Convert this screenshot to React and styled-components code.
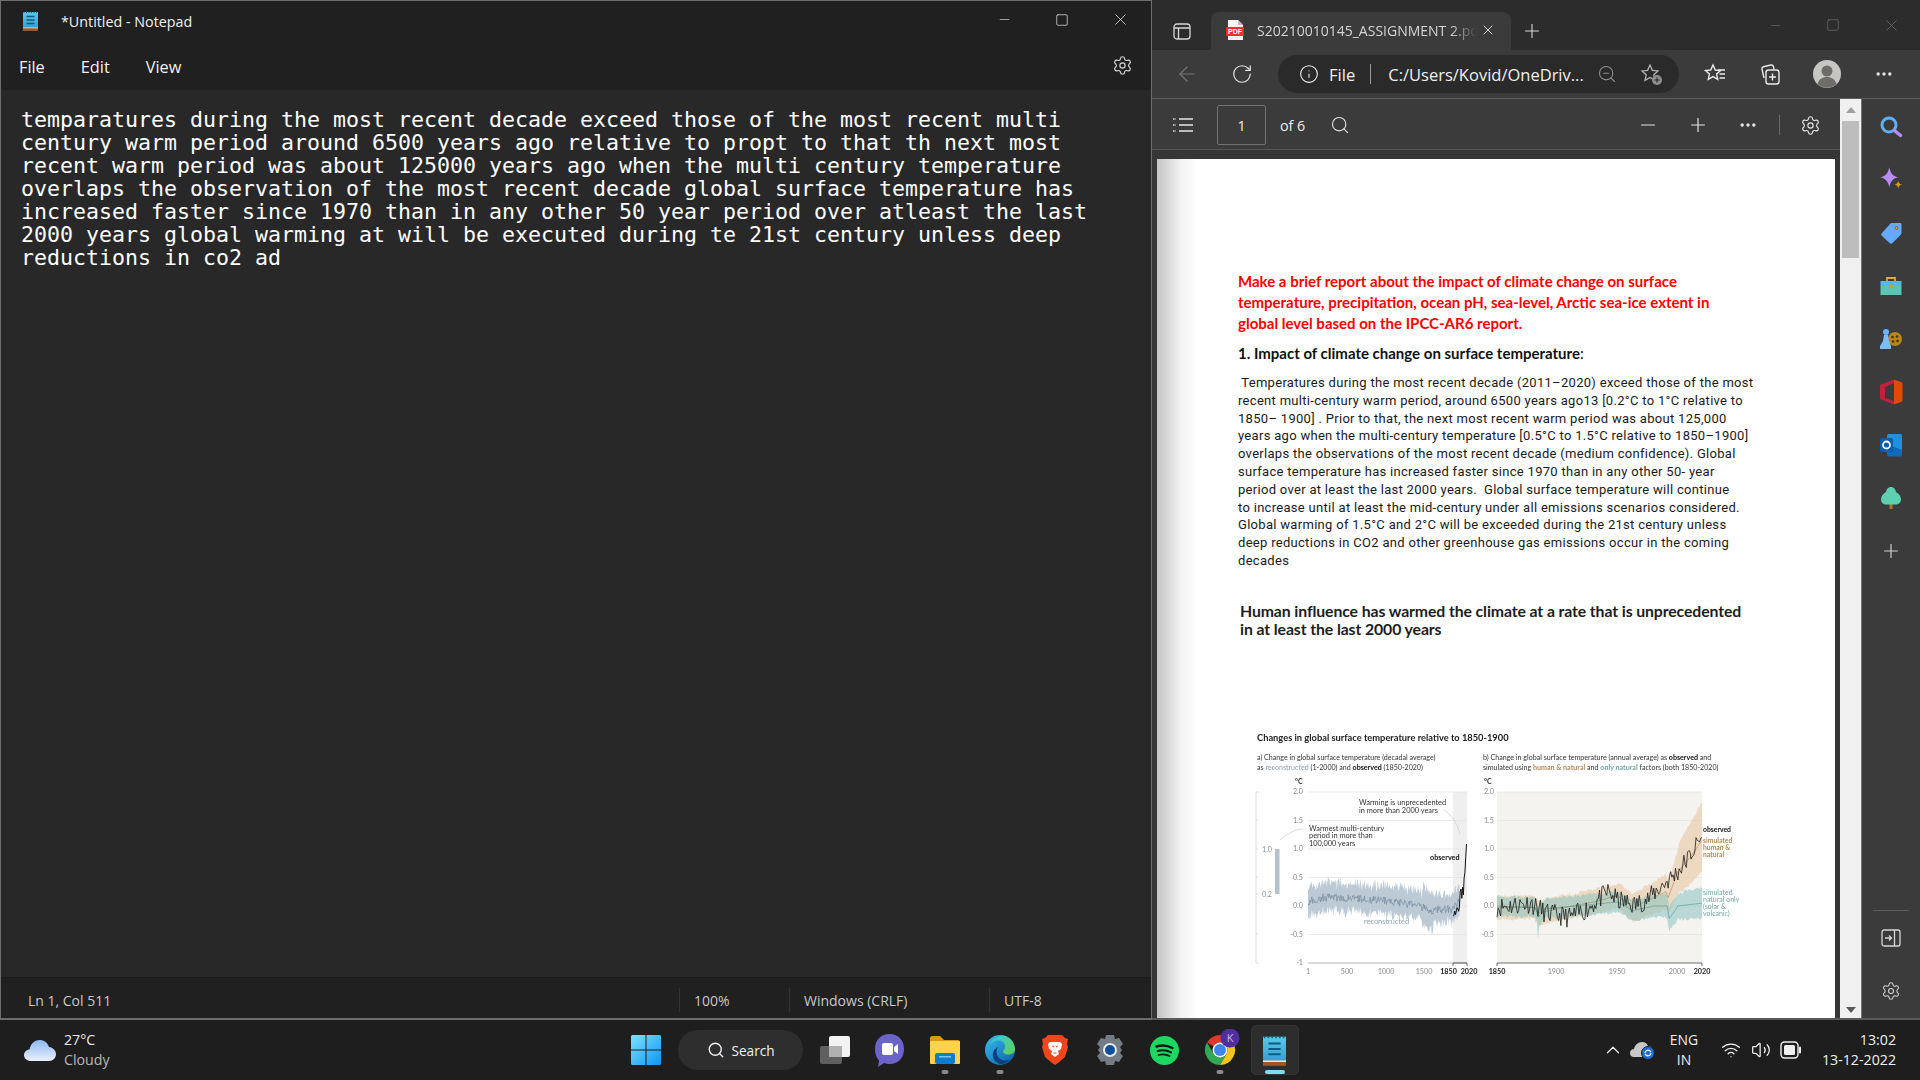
import React from 'react';
import styled, { createGlobalStyle } from 'styled-components';
import {
    ArrowLeft, RotateCw, Info, ZoomOut, Search, Minus, Plus, Ellipsis, Settings, X, Square, ChevronUp, Wifi, Volume2,
} from 'lucide-react';

const GlobalStyle = createGlobalStyle`
    html, body {
        margin: 0;
        width: 1920px;
        height: 1080px;
        overflow: hidden;
        background: #1f1f1f;
        font-family: "Open Sans", "Noto Sans", sans-serif;
    }
    * { box-sizing: border-box; }
`;

const Screen = styled.div`
    width: 1920px;
    height: 1080px;
    display: flex;
    flex-direction: column;
`;

const Desktop = styled.div`
    height: 1020px;
    display: flex;
`;

/* ---------- notepad ---------- */

const Notepad = styled.section`
    width: 1152px;
    display: flex;
    flex-direction: column;
    border: 1px solid #6d6d6d;
    border-width: 1px 1px 2px 1px;
    background: #202020;
    color: #fff;
`;

const NoteTitleBar = styled.div`
    height: 44px;
    flex: none;
    display: flex;
    align-items: center;
    padding: 0 2px 4px 22px;
`;

const NoteTitle = styled.span`
    margin-left: 23px;
    font-size: 14.3px;
    color: #f0f0f0;
`;

const WindowControls = styled.div`
    margin-left: auto;
    margin-top: -3px;
    display: flex;
    color: ${props => props.$dim ? '#6f6f6f' : '#e8e8e8'};
`;

const WindowButton = styled.div`
    width: ${props => props.$width || 58}px;
    height: 40px;
    display: flex;
    align-items: center;
    justify-content: center;
`;

const NoteMenuBar = styled.div`
    height: 45px;
    flex: none;
    display: flex;
    align-items: center;
    padding: 0 13px 2px 18px;
    gap: 36px;
`;

const MenuItem = styled.span`
    font-size: 16.3px;
    color: #f2f2f2;
`;

const NoteGear = styled.div`
    margin-left: auto;
    color: #d6d6d6;
    display: flex;
    margin-right: 5px;
    margin-bottom: 2px;
`;

const Editor = styled.div`
    flex: 1;
    background: #282828;
    padding: 18px 0 0 20px;
    font-family: "DejaVu Sans Mono", monospace;
    font-size: 21.6px;
    line-height: 23px;
    color: #fff;
`;

const EditorLine = styled.div`
    white-space: pre;
`;

const NoteStatus = styled.div`
    height: 41px;
    flex: none;
    display: flex;
    align-items: center;
    padding-top: 4px;
    font-size: 14px;
    color: #c8c8c8;
    border-top: 1px solid #1b1b1b;
`;

const StatusCell = styled.div`
    width: ${props => props.$width}px;
    height: 24px;
    display: flex;
    align-items: center;
    padding-left: ${props => props.$first ? 27 : 14}px;
    border-left: ${props => props.$first ? 'none' : '1px solid #333'};
`;

/* ---------- browser ---------- */

const Browser = styled.section`
    width: 768px;
    display: flex;
    flex-direction: column;
    background: #3b3b3b;
    color: #f0f0f0;
`;

const TabStrip = styled.div`
    height: 50px;
    flex: none;
    display: flex;
    align-items: flex-end;
    background: #2c2c2c;
    padding-left: 59px;
    position: relative;
`;

const TabActions = styled.div`
    position: absolute;
    left: 21px;
    top: 23px;
    display: flex;
`;

const Tab = styled.div`
    width: 300px;
    height: 38px;
    display: flex;
    align-items: center;
    padding: 0 10px 2px 15px;
    background: #3b3b3b;
    border-radius: 8px 8px 0 0;
`;

const TabTitle = styled.span`
    margin-left: 13px;
    width: 220px;
    overflow: hidden;
    white-space: nowrap;
    font-size: 14px;
    color: #d4d4d4;
    -webkit-mask-image: linear-gradient(90deg, #000 88%, transparent);
    mask-image: linear-gradient(90deg, #000 88%, transparent);
`;

const TabClose = styled.span`
    display: flex;
    margin-left: 3px;
    color: #e2e2e2;
`;

const NewTab = styled.span`
    display: flex;
    margin: 0 0 8px 10px;
    color: #d8d8d8;
`;

const StripControls = styled(WindowControls)`
    position: absolute;
    right: 0;
    top: 5px;
    margin-top: 0;
    gap: 0;
`;

const Toolbar = styled.div`
    height: 49px;
    flex: none;
    display: flex;
    align-items: center;
    padding: 0 0 0 20px;
    border-bottom: 1px solid #5c5c5c;
`;

const ToolIcon = styled.div`
    width: ${props => props.$width || 30}px;
    height: 30px;
    flex: none;
    display: flex;
    align-items: center;
    justify-content: center;
    margin-left: ${props => props.$left || 0}px;
    color: ${props => props.$color || '#e6e6e6'};
`;

const AddressPill = styled.div`
    width: 401px;
    height: 38px;
    margin-left: 21px;
    padding-left: 21px;
    display: flex;
    align-items: center;
    background: #2a2a2a;
    border-radius: 19px;
    flex: none;
`;

const AddressFile = styled.span`
    margin-left: 10px;
    font-size: 16.6px;
    color: #f0f0f0;
`;

const AddressRule = styled.span`
    width: 1px;
    height: 20px;
    margin: 0 17px 0 15px;
    background: #9a9a9a;
`;

const AddressUrl = styled.span`
    width: 207px;
    flex: none;
    font-size: 16.5px;
    white-space: nowrap;
    color: #f0f0f0;
`;

const Avatar = styled.div`
    width: 28px;
    height: 28px;
    margin-left: 28px;
    display: flex;
    flex: none;
`;

const BrowserBody = styled.div`
    flex: 1;
    min-height: 0;
    display: flex;
    border-bottom: 2px solid #5a5a5a;
`;

const PdfColumn = styled.div`
    width: 688px;
    flex: none;
    display: flex;
    flex-direction: column;
    min-height: 0;
`;

const PdfToolbar = styled.div`
    height: 51px;
    flex: none;
    display: flex;
    align-items: center;
    padding: 2px 0 0 20px;
    border-bottom: 1px solid #555;
    font-size: 14px;
`;

const PageBox = styled.div`
    width: 49px;
    height: 40px;
    margin-left: 23px;
    flex: none;
    display: flex;
    align-items: center;
    justify-content: center;
    border: 1px solid #737373;
    border-radius: 2px;
    font-size: 14.3px;
`;

const PageCount = styled.span`
    margin-left: 14px;
    font-size: 14.3px;
    color: #eee;
`;

const PdfRule = styled.span`
    width: 1px;
    height: 20px;
    margin-left: 16px;
    background: #6a6a6a;
`;

const PdfCanvas = styled.div`
    flex: 1;
    min-height: 0;
    padding: 9px 0 0 5px;
    display: flex;
    background: #363636;
`;

const PdfPage = styled.article`
    width: 678px;
    padding: 112px 0 0 81px;
    background: linear-gradient(90deg, #c4c4c4 0, #f2f2f2 24px, #fff 40px);
    overflow: hidden;
    font-family: Lato, "Liberation Sans", sans-serif;
    color: #111;
`;

const RedHeading = styled.div`
    color: #f00;
    font-weight: 700;
    font-size: 15px;
    line-height: 21px;
    white-space: pre;
`;

const SectionHeading = styled.div`
    margin-top: 9px;
    font-weight: 700;
    font-size: 15px;
    line-height: 21px;
    white-space: pre;
    color: #111;
`;

const HeadingColon = styled.span`
    font-weight: 400;
`;

const BodyCopy = styled.div`
    margin-top: 10px;
    font-family: Roboto, Lato, sans-serif;
    font-size: 13px;
    line-height: 17.8px;
    letter-spacing: 0.3px;
    color: #1a1a1a;
`;

const CopyLine = styled.div`
    white-space: pre;
`;

const Claim = styled.div`
    margin: 32px 0 0 2px;
    font-weight: 700;
    font-size: 15.8px;
    line-height: 18.5px;
    color: #1d1d1d;
    letter-spacing: -0.1px;
`;

const ChartSvg = styled.svg`
    display: block;
    margin: 81px 0 0 2px;
    filter: blur(0.3px);
`;

const ChartText = styled.text`
    font-family: Lato, sans-serif;
    font-size: ${props => props.$size || 7.2}px;
    font-weight: ${props => props.$bold ? 700 : 400};
    fill: ${props => props.$fill || '#333'};
`;

const Scrollbar = styled.div`
    width: 22px;
    flex: none;
    display: flex;
    flex-direction: column;
    align-items: center;
    justify-content: space-between;
    padding: 8px 0 5px;
    background: #f0f0f0;
    border-right: 1px solid #777;
    position: relative;
`;

const ScrollThumb = styled.div`
    position: absolute;
    top: 22px;
    left: 2px;
    width: 17px;
    height: 137px;
    background: #bdbdbd;
`;

const ArrowUp = styled.div`
    width: 0;
    height: 0;
    border: 5px solid transparent;
    border-top: 0;
    border-bottom: 6px solid #a0a0a0;
`;

const ArrowDown = styled.div`
    width: 0;
    height: 0;
    border: 5px solid transparent;
    border-bottom: 0;
    border-top: 6px solid #5a5a5a;
`;

const Sidebar = styled.aside`
    width: 58px;
    flex: none;
    display: flex;
    flex-direction: column;
    align-items: center;
    padding: 1px 0 0;
`;

const SideSlot = styled.div`
    width: 58px;
    height: 53px;
    flex: none;
    display: flex;
    align-items: center;
    justify-content: center;
    color: #d0d0d0;
`;

const SideFoot = styled.div`
    margin-top: auto;
    border-top: 1px solid #5c5c5c;
    width: 36px;
    display: flex;
    flex-direction: column;
    align-items: center;
    padding: 0 0 1px;
`;

/* ---------- taskbar ---------- */

const Taskbar = styled.footer`
    height: 60px;
    display: grid;
    grid-template-columns: 1fr auto 1fr;
    align-items: center;
    background: #1e1e1e;
    color: #fff;
`;

const Weather = styled.div`
    display: flex;
    align-items: center;
    padding-left: 24px;
`;

const WeatherText = styled.div`
    margin-left: 8px;
    font-size: 14.2px;
    line-height: 20px;
    color: #e8e8e8;
`;

const WeatherSub = styled.div`
    color: #b8b8b8;
`;

const TaskCenter = styled.div`
    display: flex;
    align-items: center;
    gap: 7px;
`;

const TaskButton = styled.div`
    width: 48px;
    height: 50px;
    display: flex;
    align-items: center;
    justify-content: center;
    position: relative;
    border-radius: 5px;
    background: ${props => props.$active ? '#2d2d2d' : 'transparent'};
    border: 1px solid ${props => props.$active ? '#353535' : 'transparent'};
`;

const RunDot = styled.span`
    position: absolute;
    bottom: 0;
    left: 50%;
    transform: translateX(-50%);
    width: ${props => props.$active ? 20 : 7}px;
    height: 4px;
    border-radius: 2px;
    background: ${props => props.$active ? '#7fdde8' : '#8a8a8a'};
`;

const SearchPill = styled.div`
    width: 125px;
    height: 40px;
    margin: 0 1px;
    display: flex;
    align-items: center;
    padding-left: 29px;
    gap: 7px;
    border-radius: 20px;
    background: #2e2e2e;
    font-size: 13.6px;
    color: #f0f0f0;
`;

const Tray = styled.div`
    display: flex;
    align-items: center;
    justify-content: flex-end;
    padding-right: 24px;
`;

const TrayIcon = styled.div`
    width: 30px;
    display: flex;
    align-items: center;
    justify-content: center;
    color: #f0f0f0;
    margin-left: ${props => props.$left || 0}px;
`;

const Lang = styled.div`
    width: 44px;
    margin-left: 4px;
    text-align: center;
    font-size: 13.9px;
    line-height: 20px;
    color: #eee;
`;

const Clock = styled.div`
    width: 90px;
    text-align: right;
    font-size: 14.2px;
    line-height: 20px;
    color: #eee;
`;

/* ---------- drawn icons ---------- */

const NotepadIcon = ({ w = 15, h = 20, id = 'np' }) => (
    <svg width={w} height={h} viewBox="0 0 15 20">
        <defs>
            <linearGradient id={id} x1="0" y1="0" x2="0" y2="1">
                <stop offset="0" stopColor="#5ac8e8" />
                <stop offset="1" stopColor="#2f9fd0" />
            </linearGradient>
        </defs>
        <rect x="0" y="1" width="15" height="17" fill={`url(#${id})`} />
        <path d="M1 0.5v1.5M3.5 0.5v1.5M6 0.5v1.5M8.5 0.5v1.5M11 0.5v1.5M13.5 0.5v1.5" stroke="#0f5f80" strokeWidth="1" />
        <path d="M3.5 5.5h8M3.5 9h8M3.5 12.5h8" stroke="#0f5a82" strokeWidth="1.3" />
        <rect x="0" y="16.5" width="15" height="1" fill="#f0e2c8" />
        <rect x="0" y="17.5" width="15" height="2.5" fill="#a8541e" />
    </svg>
);

const TabListIcon = () => (
    <svg width="18" height="17" viewBox="0 0 18 17" fill="none" stroke="#d6d6d6" strokeWidth="1.3">
        <rect x="1" y="1" width="16" height="15" rx="3" />
        <path d="M1 5h16M5.5 5v11" />
    </svg>
);

const PdfIcon = () => (
    <svg width="18" height="20" viewBox="0 0 18 20">
        <path d="M2 0h10l5 5v15H2z" fill="#f4f4f4" />
        <path d="M12 0l5 5h-5z" fill="#bdbdbd" />
        <rect x="0" y="7" width="18" height="9" rx="1" fill="#ee2f2f" />
        <text x="9" y="14.2" textAnchor="middle" fontSize="7" fontWeight="700" fontFamily="Liberation Sans" fill="#fff">PDF</text>
    </svg>
);

const FavAddIcon = () => (
    <svg width="24" height="24" viewBox="0 0 24 24" fill="none" stroke="#b4b4b4" strokeWidth="1.3">
        <path d="M10 3l2.4 5.3 5.6.6-4.2 3.9 1.2 5.6-5-2.9-5 2.9 1.2-5.6L2 8.9l5.6-.6z" />
        <circle cx="17" cy="18" r="5" fill="#8e8e8e" stroke="none" />
        <path d="M17 15.5v5M14.5 18h5" stroke="#2a2a2a" strokeWidth="1.2" />
    </svg>
);

const FavoritesIcon = () => (
    <svg width="24" height="24" viewBox="0 0 24 24" fill="none" stroke="#eaeaea" strokeWidth="1.4">
        <path d="M10 3l2.3 5 5.2.5-3.9 3.6 1.1 5.2-4.7-2.7-4.7 2.7 1.1-5.2L2.5 8.5 7.7 8z" />
        <path d="M15 8h7M16.5 12h5.5M16.5 16h5.500" />
    </svg>
);

const CollectionsIcon = () => (
    <svg width="24" height="24" viewBox="0 0 24 24" fill="none" stroke="#eaeaea" strokeWidth="1.4">
        <path d="M6 16l-2-9c-.2-1 .3-2 1.3-2.2L13 3c1-.2 2 .3 2.3 1.3L16 7" />
        <rect x="8" y="8" width="13" height="14" rx="2.5" />
        <path d="M14.5 11.5v7M11 15h7" />
    </svg>
);

const ProfileIcon = () => (
    <svg width="28" height="28" viewBox="0 0 28 28">
        <circle cx="14" cy="14" r="14" fill="#c8c6c2" />
        <circle cx="14" cy="11" r="5.5" fill="#6f6d6a" />
        <path d="M4.5 24c1.5-5 5-7 9.5-7s8 2 9.5 7a14 14 0 0 1-19 0z" fill="#6f6d6a" />
    </svg>
);

const OutlineIcon = () => (
    <svg width="22" height="16" viewBox="0 0 22 16" fill="none" stroke="#e6e6e6" strokeWidth="1.4">
        <path d="M7 2h14M7 8h14M7 14h14" />
        <path d="M1 2h2.5M1 8h2.5M1 14h2.5" strokeDasharray="1.5 .5" />
    </svg>
);

const SideSearch = () => (
    <svg width="24" height="24" viewBox="0 0 24 24" fill="none">
        <circle cx="10" cy="10" r="7" stroke="#5cb0ff" strokeWidth="3" />
        <path d="M15.5 15.5l6 5" stroke="#b58cf0" strokeWidth="3.5" strokeLinecap="round" />
    </svg>
);

const SideSparkle = () => (
    <svg width="27" height="27" viewBox="0 0 24 24">
        <path d="M10 1c1 5 3 8 8 9-5 1-7 4-8 9-1-5-3-8-8-9 5-1 7-4 8-9z" fill="#b78df5" />
        <path d="M18 13c.4 2 1.2 3 3.5 3.5-2.3.5-3.1 1.5-3.5 3.5-.4-2-1.2-3-3.5-3.5 2.3-.5 3.1-1.5 3.5-3.5z" fill="#d69a1c" />
    </svg>
);

const SideTag = () => (
    <svg width="24" height="24" viewBox="0 0 24 24">
        <path d="M13 2h8c1 0 1.5.5 1.5 1.5v8c0 1-.5 2-1 2.5l-8 8c-1 1-2 1-3 0l-7.5-7c-1-1-1-2 0-3l8-9c.5-.5 1-1 2-1z" fill="#66aaff" />
        <circle cx="17.5" cy="7" r="1.8" fill="#8a5a10" />
        <circle cx="17.5" cy="7" r="1" fill="#f0a020" />
    </svg>
);

const SideTools = () => (
    <svg width="24" height="24" viewBox="0 0 24 24">
        <path d="M8 7V4h8v3" fill="none" stroke="#e0a63c" strokeWidth="1.8" />
        <rect x="1.5" y="7" width="21" height="5" fill="#5ab4f0" />
        <rect x="1.5" y="12" width="21" height="9" fill="#5cc4b4" />
        <rect x="10.5" y="10.5" width="3" height="4" rx="1" fill="#d69a1c" />
    </svg>
);

const SideGames = () => (
    <svg width="24" height="24" viewBox="0 0 24 24">
        <circle cx="16" cy="12" r="7" fill="#b8861c" />
        <circle cx="13.5" cy="10" r="1.3" fill="#4a3208" />
        <circle cx="18" cy="9.5" r="1.3" fill="#4a3208" />
        <circle cx="14" cy="14.5" r="1.3" fill="#4a3208" />
        <circle cx="18.5" cy="14" r="1.3" fill="#4a3208" />
        <circle cx="7" cy="5" r="3" fill="#69b4ff" />
        <path d="M5 8h4l1 6 2 5v3H1v-3l3-5z" fill="#7dbcff" />
    </svg>
);

const SideOffice = () => (
    <svg width="24" height="26" viewBox="0 0 24 26">
        <path d="M1 6l14-5.5V4L6 8v11l9 3v3.500L1 20z" fill="#c2213c" />
        <path d="M15 .5l7 2.500c1 .5 1.5 1 1.5 2v16c0 1-.5 1.5-1.5 2l-7 2.500z" fill="#e04a05" />
    </svg>
);

const SideOutlook = () => (
    <svg width="24" height="24" viewBox="0 0 24 24">
        <rect x="8" y="1" width="15" height="21" rx="1.5" fill="#1f8fe0" />
        <path d="M8 11l15 6v5a1.5 1.5 0 0 1-1.5 1.5H9.5A1.5 1.5 0 0 1 8 22z" fill="#0f6cbd" />
        <rect x="1" y="5" width="13" height="14" rx="1.5" fill="#0a5cad" />
        <circle cx="7.5" cy="12" r="3.5" fill="none" stroke="#fff" strokeWidth="1.8" />
    </svg>
);

const SideTree = () => (
    <svg width="24" height="24" viewBox="0 0 24 24">
        <rect x="10.5" y="17" width="3" height="6" fill="#b07820" />
        <path d="M12 1c3 0 4.5 2.5 5 5 3 1.5 5 4.5 5 7.5 0 3-2.5 5-5 5H7c-2.5 0-5-2-5-5 0-3 2-6 5-7.5.5-2.5 2-5 5-5z" fill="#5cd0b0" />
    </svg>
);

const SideSplit = () => (
    <svg width="20" height="18" viewBox="0 0 20 18" fill="none" stroke="#d6d6d6" strokeWidth="1.3">
        <rect x="1" y="1" width="18" height="16" rx="2" />
        <path d="M13.5 1v16M4 9h6M8 6.5L10.5 9 8 11.5" />
    </svg>
);

const WindowsLogo = () => (
    <svg width="30" height="30" viewBox="0 0 30 30">
        <defs>
            <linearGradient id="win" x1="0" y1="0" x2="1" y2="1">
                <stop offset="0" stopColor="#7be3ff" />
                <stop offset="1" stopColor="#0f94f5" />
            </linearGradient>
        </defs>
        <path d="M0 1.5A1.5 1.5 0 0 1 1.5 0h13v14.5H0zM15.5 0h13A1.5 1.5 0 0 1 30 1.5v13H15.5zM0 15.5h14.5V30h-13A1.5 1.5 0 0 1 0 28.5zM15.5 15.5H30v13a1.5 1.5 0 0 1-1.5 1.5h-13z" fill="url(#win)" />
    </svg>
);

const TaskViewIcon = () => (
    <svg width="30" height="28" viewBox="0 0 30 28">
        <rect x="0" y="10" width="22" height="18" rx="2" fill="#5f5f5f" />
        <rect x="9" y="0" width="21" height="21" rx="2" fill="#f2f2f2" />
        <rect x="9" y="10" width="13" height="11" fill="#b0b0b0" />
    </svg>
);

const MeetIcon = () => (
    <svg width="29" height="33" viewBox="0 0 29 33">
        <path d="M14.5 0C23 0 29 6 29 15s-6 15-14.5 15c-2 0-4-.5-5.5-1l-6 4 1-6.5C1.5 24 0 20 0 15 0 6 6 0 14.5 0z" fill="#6a64c8" />
        <rect x="7" y="9" width="11" height="12" rx="2" fill="#fff" />
        <path d="M19 13l4-3v10l-4-3z" fill="#fff" />
    </svg>
);

const FolderIcon = () => (
    <svg width="30" height="28" viewBox="0 0 30 28">
        <path d="M0 2c0-1 1-2 2-2h8l4 4h14c1 0 2 1 2 2v4H0z" fill="#d79a12" />
        <rect x="0" y="5" width="30" height="23" rx="1" fill="#fcd34d" />
        <rect x="5" y="17" width="20" height="11" rx="2" fill="#0f7cd0" />
        <rect x="9" y="20" width="12" height="1.5" fill="#7cc8f5" />
    </svg>
);

const EdgeIcon = () => (
    <svg width="30" height="30" viewBox="0 0 30 30">
        <defs>
            <linearGradient id="edgeA" x1="0" y1="0" x2="1" y2="1">
                <stop offset="0" stopColor="#35c1f1" />
                <stop offset="1" stopColor="#0c59a4" />
            </linearGradient>
            <linearGradient id="edgeB" x1="0" y1="0" x2="1" y2="1">
                <stop offset="0" stopColor="#35c8e8" />
                <stop offset="1" stopColor="#60d050" />
            </linearGradient>
        </defs>
        <circle cx="15" cy="15" r="15" fill="url(#edgeA)" />
        <path d="M4 12C6 4 13 0 18 .5c7 .8 12 7 12 14 0 3-3 5-7 5-3 0-5-1-5-3 0-1 2-2 2-5 0-4-3-6-7-6-4 0-8 2.5-9 6.5z" fill="url(#edgeB)" />
        <path d="M16 29c-6-1-9-6-8-11 .5-3 3-5 5-6-2 3-2 7 0 10 2 3 7 5 13 2-3 3-6 5-10 5z" fill="#0a3f80" />
    </svg>
);

const BraveIcon = () => (
    <svg width="26" height="30" viewBox="0 0 26 30">
        <path d="M6 0h14l3 3 3 1-1 5 1 3-3 10-7 6-3 2-3-2-7-6L0 12l1-3-1-5 3-1z" fill="#f0461e" />
        <path d="M8 7h10l2 2-1 5-3 2 1 3-4 3-4-3 1-3-3-2-1-5z" fill="#fff" />
        <path d="M10.5 11l1.5 1M15.5 11L14 12M11.5 18h3" stroke="#f0461e" strokeWidth="1.2" />
    </svg>
);

const GearAppIcon = () => (
    <svg width="30" height="30" viewBox="0 0 30 30">
        <path d="M11 0h8l1 4 4-1 4 6-3 3 2 3-2 3 3 3-4 6-4-1-1 4h-8l-1-4-4 1-4-6 3-3-2-3 2-3-3-3 4-6 4 1z" fill="#737b84" />
        <circle cx="15" cy="15" r="7" fill="#e8e8e8" />
        <circle cx="15" cy="15" r="5" fill="#0e4f9a" />
    </svg>
);

const SpotifyIcon = () => (
    <svg width="29" height="29" viewBox="0 0 29 29" fill="none" stroke="#10181a" strokeLinecap="round">
        <circle cx="14.5" cy="14.5" r="14.5" fill="#1ed760" stroke="none" />
        <path d="M6.5 10.5c5-1.5 11-1 16 1.5" strokeWidth="2.4" />
        <path d="M7.5 15c4.5-1.2 9.5-.8 13.5 1.4" strokeWidth="2" />
        <path d="M8.5 19c4-1 8-.6 11 1.1" strokeWidth="1.7" />
    </svg>
);

const ChromeIcon = () => (
    <svg width="42" height="42" viewBox="0 0 42 42">
        <path d="M8 13.5A15 15 0 0 1 34 13.5H21a7.5 7.5 0 0 0-6.5 3.75z" fill="#e0382c" />
        <path d="M34 13.5A15 15 0 0 1 21 36l6.5-11.25a7.5 7.5 0 0 0 0-7.5 7.5 7.5 0 0 0-6.5-3.75z" fill="#f7c41a" />
        <path d="M21 36A15 15 0 0 1 8 13.5l6.5 11.25a7.5 7.5 0 0 0 13 0z" fill="#31a853" />
        <circle cx="21" cy="21" r="7.5" fill="#fff" />
        <circle cx="21" cy="21" r="6" fill="#3e85f0" />
        <circle cx="31" cy="9" r="9.5" fill="#4f2f9e" />
        <text x="31" y="13" textAnchor="middle" fontSize="11" fontFamily="Open Sans" fill="#c8b8f0">K</text>
    </svg>
);

const CloudIcon = () => (
    <svg width="32" height="22" viewBox="0 0 32 22">
        <defs>
            <linearGradient id="cloud" x1="0" y1="0" x2="0" y2="1">
                <stop offset="0" stopColor="#8fb8f0" />
                <stop offset="1" stopColor="#e8f0ff" />
            </linearGradient>
        </defs>
        <path d="M7 22C3 22 0 19.5 0 16c0-3 2.5-5.5 5.5-5.5C6.5 5 10.5 1 15.5 1c4.5 0 8 2.5 9.5 7 4 .5 7 3.5 7 7 0 4-3 7-7 7z" fill="url(#cloud)" />
    </svg>
);

const OneDriveTray = () => (
    <svg width="26" height="20" viewBox="0 0 26 20">
        <path d="M4 17c-2.5 0-4-1.5-4-4s2-4 4-4c1-4 4-7 8-7 3 0 5 1.500 6 4 3 0 5 2 5 5 0 3-2 6-5 6z" fill="#c8c8c8" />
        <circle cx="18" cy="13" r="6.5" fill="#1f6fd0" stroke="#1e1e1e" strokeWidth="1" />
        <path d="M15 13a3 3 0 0 1 5-2l1 1M21 13a3 3 0 0 1-5 2l-1-1" stroke="#fff" strokeWidth="1.2" fill="none" />
    </svg>
);

const BatteryIcon = () => (
    <svg width="22" height="18" viewBox="0 0 22 18" fill="none">
        <rect x="1" y="1" width="17" height="16" rx="3.5" stroke="#f0f0f0" strokeWidth="1.4" />
        <rect x="4" y="4" width="11" height="10" rx="1.5" fill="#f0f0f0" />
        <path d="M20 6.5v5" stroke="#f0f0f0" strokeWidth="2" strokeLinecap="round" />
    </svg>
);

/* ---------- chart data ---------- */

const seeded = start => {
    let s = start;
    return () => {
        s = (s * 16807) % 2147483647;
        return s / 2147483647 - 0.5;
    };
};

const between = (keys, x) => {
    for (let i = 1; i < keys.length; i++) {
        if (x <= keys[i][0]) {
            const [x0, y0] = keys[i - 1];
            const [x1, y1] = keys[i];
            return y0 + ((y1 - y0) * (x - x0)) / (x1 - x0);
        }
    }
    return keys[keys.length - 1][1];
};

const toLine = pts => 'M' + pts.map(p => `${p[0].toFixed(1)} ${p[1].toFixed(1)}`).join('L');
const toBand = (up, low) => toLine(up.concat([...low].reverse())) + 'Z';

const yOf = v => 906 - 57 * v;
const xA = year => 1308 + (year - 1) * 0.0785;
const xB = year => 1497 + ((year - 1850) * 205) / 170;

const reconKeys = [[1, 0.08], [200, 0.15], [500, 0.14], [800, 0.11], [1000, 0.09], [1100, 0.07], [1300, 0.03], [1450, -0.02], [1550, -0.08], [1700, -0.06], [1850, -0.05], [1930, 0.1]];
const reconRand = seeded(77);
const reconMid = [];
const reconUp = [];
const reconLow = [];
for (let year = 1; year <= 1930; year += 8) {
    const mid = between(reconKeys, year) + reconRand() * 0.14;
    const spread = (year > 1450 && year < 1600 ? 0.3 : 0.2) + Math.abs(reconRand()) * 0.26;
    reconMid.push([xA(year), yOf(mid)]);
    reconUp.push([xA(year), yOf(mid + spread)]);
    reconLow.push([xA(year), yOf(mid - spread * 0.9)]);
}

const obsARand = seeded(31);
const obsA = [];
for (let year = 1850; year <= 2020; year += 10) {
    const mid = between([[1850, -0.05], [1900, -0.1], [1950, 0.2], [1980, 0.3], [2000, 0.6], [2020, 1.09]], year);
    obsA.push([xA(year), yOf(mid + (year < 2010 ? obsARand() * 0.25 : 0))]);
}

const obsKeys = [[1850, -0.02], [1878, 0.05], [1890, -0.12], [1910, -0.2], [1925, -0.05], [1942, 0.25], [1950, 0.1], [1964, 0.02], [1975, 0.12], [1985, 0.32], [2000, 0.6], [2010, 0.88], [2020, 1.22]];
const humanKeys = [[1850, -0.03], [1880, -0.02], [1885, -0.12], [1900, -0.05], [1930, 0.07], [1950, 0.18], [1963, -0.03], [1975, 0.1], [1990, 0.25], [1992, 0.15], [2000, 0.6], [2010, 0.85], [2020, 1.15]];
const naturalKeys = [[1850, 0], [1882, -0.03], [1884, -0.2], [1890, -0.05], [1950, 0.07], [1963, -0.08], [1980, 0], [1991, 0], [1993, -0.22], [2000, 0], [2020, 0.05]];

const obsRand = seeded(11);
const bandRand = seeded(211);
const obsB = [];
const humanMid = [];
const humanUp = [];
const humanLow = [];
const naturalMid = [];
const naturalUp = [];
const naturalLow = [];
for (let year = 1850; year <= 2020; year++) {
    const x = xB(year);
    obsB.push([x, yOf(between(obsKeys, year) + obsRand() * 0.36)]);
    const human = between(humanKeys, year);
    const natural = between(naturalKeys, year);
    const grow = between([[1850, 0.2], [1950, 0.22], [1990, 0.3], [2020, 0.55]], year);
    humanMid.push([x, yOf(human)]);
    humanUp.push([x, yOf(human + grow + bandRand() * 0.06 + (year > 2000 ? 0.12 : 0))]);
    humanLow.push([x, yOf(human - grow + bandRand() * 0.06)]);
    const wide = between([[1850, 0.17], [1950, 0.18], [1990, 0.2], [2020, 0.28]], year);
    naturalMid.push([x, yOf(natural)]);
    naturalUp.push([x, yOf(natural + wide + bandRand() * 0.06)]);
    naturalLow.push([x, yOf(natural - wide + bandRand() * 0.06 - (year === 1884 ? 0.2 : 0))]);
}

const axisValues = [[2, '2.0'], [1.5, '1.5'], [1, '1.0'], [0.5, '0.5'], [0, '0.0'], [-0.5, '-0.5'], [-1, '-1']];

const ClimateChart = () => (
    <ChartSvg width="520" height="270" viewBox="1240 720 520 270">
        <ChartText x="1257" y="741" $size={9.3} $bold $fill="#222">Changes in global surface temperature relative to 1850-1900</ChartText>
        <ChartText x="1257" y="760" $size={7.1}>a) Change in global surface temperature (decadal average)</ChartText>
        <ChartText x="1257" y="770" $size={7.1}>
            as <tspan fill="#8ea4b6">reconstructed</tspan> (1-2000) and <tspan fontWeight="700" fill="#111">observed</tspan> (1850-2020)
        </ChartText>
        <ChartText x="1483" y="760" $size={7.1}>b) Change in global surface temperature (annual average) as <tspan fontWeight="700" fill="#111">observed</tspan> and</ChartText>
        <ChartText x="1483" y="770" $size={7.1}>
            simulated using <tspan fill="#b08a5a" fontWeight="700">human &amp; natural</tspan> and <tspan fill="#6fa8a4" fontWeight="700">only natural</tspan> factors (both 1850-2020)
        </ChartText>

        <ChartText x="1295" y="784" $size={7} $bold>°C</ChartText>
        <ChartText x="1484" y="784" $size={7} $bold>°C</ChartText>

        <rect x="1453" y="792" width="14" height="171" fill="#efefed" />
        <rect x="1497" y="792" width="205" height="171" fill="#f5f3f0" />
        {axisValues.map(([v, label]) => (
            <g key={label}>
                {v > -1 && <path d={`M1308 ${yOf(v)}H1467M1497 ${yOf(v)}H1702`} stroke="#e2e2e0" strokeWidth="0.7" />}
                <ChartText x="1303" y={yOf(v) + 2.4} textAnchor="end" $fill="#8a8a8a">{label}</ChartText>
                {v > -1 && <ChartText x="1494" y={yOf(v) + 2.4} textAnchor="end" $fill="#8a8a8a">{label}</ChartText>}
            </g>
        ))}

        <path d="M1259 792H1256V963H1259" fill="none" stroke="#c8c8c8" strokeWidth="0.6" />
        <path d="M1256 820h2M1256 849h2M1256 877h2M1256 894h2M1256 934h2" stroke="#c8c8c8" strokeWidth="0.6" />
        <rect x="1275" y="849" width="4.5" height="45" fill="#b4c2cc" />
        <ChartText x="1262" y="851.5" $fill="#8098ac">1.0</ChartText>
        <ChartText x="1262" y="896.5" $fill="#8098ac">0.2</ChartText>

        <path d={toBand(reconUp, reconLow)} fill="#bccad5" />
        <path d={toLine(reconMid)} fill="none" stroke="#71879a" strokeWidth="0.6" />
        <path d={toLine(obsA)} fill="none" stroke="#111" strokeWidth="1" />
        <path d="M1280 840C1290 832 1296 829 1303 829" fill="none" stroke="#bbb" strokeWidth="0.5" />
        <path d="M1444 810C1450 814 1457 822 1460 834" fill="none" stroke="#bbb" strokeWidth="0.5" />

        <ChartText x="1309" y="830.5" $size={7.4}>Warmest multi-century</ChartText>
        <ChartText x="1309" y="838.3" $size={7.4}>period in more than</ChartText>
        <ChartText x="1309" y="846" $size={7.4}>100,000 years</ChartText>
        <ChartText x="1359" y="805" $size={7.4}>Warming is unprecedented</ChartText>
        <ChartText x="1359" y="813" $size={7.4}>in more than 2000 years</ChartText>
        <ChartText x="1430" y="860" $size={7.2} $bold $fill="#111">observed</ChartText>
        <ChartText x="1364" y="924" $size={7.4} $fill="#8ea4b6">reconstructed</ChartText>

        <path d="M1308 963H1467" stroke="#888" strokeWidth="0.6" />
        <path d="M1453 963V966M1453 963H1467V966M1497 966V963H1702V966" fill="none" stroke="#333" strokeWidth="0.7" />
        <ChartText x="1308" y="974" textAnchor="middle" $fill="#8a8a8a">1</ChartText>
        <ChartText x="1347" y="974" textAnchor="middle" $fill="#8a8a8a">500</ChartText>
        <ChartText x="1386" y="974" textAnchor="middle" $fill="#8a8a8a">1000</ChartText>
        <ChartText x="1424" y="974" textAnchor="middle" $fill="#8a8a8a">1500</ChartText>
        <ChartText x="1448.5" y="974" textAnchor="middle" $bold $fill="#222">1850</ChartText>
        <ChartText x="1469" y="974" textAnchor="middle" $bold $fill="#222">2020</ChartText>

        <path d={toBand(humanUp, humanLow)} fill="#e8c8a4" opacity="0.62" />
        <path d={toBand(naturalUp, naturalLow)} fill="#8fc6c2" opacity="0.58" />
        <path d={toLine(humanMid)} fill="none" stroke="#a98350" strokeWidth="0.6" />
        <path d={toLine(naturalMid)} fill="none" stroke="#4f9490" strokeWidth="0.6" />
        <path d={toLine(obsB)} fill="none" stroke="#1c1c1c" strokeWidth="0.8" />

        <ChartText x="1497" y="974" textAnchor="middle" $bold $fill="#222">1850</ChartText>
        <ChartText x="1556" y="974" textAnchor="middle" $fill="#8a8a8a">1900</ChartText>
        <ChartText x="1617" y="974" textAnchor="middle" $fill="#8a8a8a">1950</ChartText>
        <ChartText x="1677" y="974" textAnchor="middle" $fill="#8a8a8a">2000</ChartText>
        <ChartText x="1702" y="974" textAnchor="middle" $bold $fill="#222">2020</ChartText>

        <ChartText x="1703" y="832" $size={6.8} $bold $fill="#111">observed</ChartText>
        <ChartText x="1703" y="843" $size={6.8} $bold $fill="#b08a5a">simulated</ChartText>
        <ChartText x="1703" y="850" $size={6.8} $bold $fill="#b08a5a">human &amp;</ChartText>
        <ChartText x="1703" y="857" $size={6.8} $bold $fill="#b08a5a">natural</ChartText>
        <ChartText x="1703" y="895" $size={7} $fill="#6fa8a4">simulated</ChartText>
        <ChartText x="1703" y="902" $size={7} $fill="#6fa8a4">natural only</ChartText>
        <ChartText x="1703" y="909" $size={7} $fill="#6fa8a4">(solar &amp;</ChartText>
        <ChartText x="1703" y="916" $size={7} $fill="#6fa8a4">volcanic)</ChartText>
    </ChartSvg>
);

/* ---------- content ---------- */

const noteLines = [
    'temparatures during the most recent decade exceed those of the most recent multi',
    'century warm period around 6500 years ago relative to propt to that th next most',
    'recent warm period was about 125000 years ago when the multi century temperature',
    'overlaps the observation of the most recent decade global surface temperature has',
    'increased faster since 1970 than in any other 50 year period over atleast the last',
    '2000 years global warming at will be executed during te 21st century unless deep',
    'reductions in co2 ad',
];

const redLines = [
    'Make a brief report about the impact of climate change on surface',
    'temperature, precipitation, ocean pH, sea-level, Arctic sea-ice extent in',
    'global level based on the IPCC-AR6 report.',
];

const bodyLines = [
    ' Temperatures during the most recent decade (2011–2020) exceed those of the most',
    'recent multi-century warm period, around 6500 years ago13 [0.2°C to 1°C relative to',
    '1850– 1900] . Prior to that, the next most recent warm period was about 125,000',
    'years ago when the multi-century temperature [0.5°C to 1.5°C relative to 1850–1900]',
    'overlaps the observations of the most recent decade (medium confidence). Global',
    'surface temperature has increased faster since 1970 than in any other 50- year',
    'period over at least the last 2000 years.  Global surface temperature will continue',
    'to increase until at least the mid-century under all emissions scenarios considered.',
    'Global warming of 1.5°C and 2°C will be exceeded during the 21st century unless',
    'deep reductions in CO2 and other greenhouse gas emissions occur in the coming',
    'decades',
];

const sideApps = [
    <SideSearch />, <SideSparkle />, <SideTag />, <SideTools />, <SideGames />, <SideOffice />, <SideOutlook />, <SideTree />,
    <Plus size={22} strokeWidth={1.3} />,
];

const taskApps = [
    { icon: <TaskViewIcon /> },
    { icon: <MeetIcon /> },
    { icon: <FolderIcon />, running: true },
    { icon: <EdgeIcon />, running: true },
    { icon: <BraveIcon /> },
    { icon: <GearAppIcon /> },
    { icon: <SpotifyIcon /> },
    { icon: <ChromeIcon />, running: true },
];

const App = () => (
    <Screen>
        <GlobalStyle />
        <Desktop>
            <Notepad>
                <NoteTitleBar>
                    <NotepadIcon />
                    <NoteTitle>*Untitled - Notepad</NoteTitle>
                    <WindowControls>
                        <WindowButton><Minus size={15} strokeWidth={1} /></WindowButton>
                        <WindowButton><Square size={14} strokeWidth={1.2} /></WindowButton>
                        <WindowButton><X size={19} strokeWidth={1} /></WindowButton>
                    </WindowControls>
                </NoteTitleBar>
                <NoteMenuBar>
                    <MenuItem>File</MenuItem>
                    <MenuItem>Edit</MenuItem>
                    <MenuItem>View</MenuItem>
                    <NoteGear><Settings size={21} strokeWidth={1.3} /></NoteGear>
                </NoteMenuBar>
                <Editor>
                    {noteLines.map(line => <EditorLine key={line}>{line}</EditorLine>)}
                </Editor>
                <NoteStatus>
                    <StatusCell $first $width={678}>Ln 1, Col 511</StatusCell>
                    <StatusCell $width={110}>100%</StatusCell>
                    <StatusCell $width={200}>Windows (CRLF)</StatusCell>
                    <StatusCell $width={120}>UTF-8</StatusCell>
                </NoteStatus>
            </Notepad>

            <Browser>
                <TabStrip>
                    <TabActions><TabListIcon /></TabActions>
                    <Tab>
                        <PdfIcon />
                        <TabTitle>S20210010145_ASSIGNMENT 2.pdf</TabTitle>
                        <TabClose><X size={16} strokeWidth={1.4} /></TabClose>
                    </Tab>
                    <NewTab><Plus size={22} strokeWidth={1.2} /></NewTab>
                    <StripControls $dim>
                        <WindowButton><Minus size={15} strokeWidth={1} /></WindowButton>
                        <WindowButton><Square size={14} strokeWidth={1.2} /></WindowButton>
                        <WindowButton><X size={19} strokeWidth={1} /></WindowButton>
                    </StripControls>
                </TabStrip>
                <Toolbar>
                    <ToolIcon $color="#777"><ArrowLeft size={24} strokeWidth={1.2} /></ToolIcon>
                    <ToolIcon $left={25}><RotateCw size={22} strokeWidth={1.3} /></ToolIcon>
                    <AddressPill>
                        <Info size={20} strokeWidth={1.3} />
                        <AddressFile>File</AddressFile>
                        <AddressRule />
                        <AddressUrl>C:/Users/Kovid/OneDriv...</AddressUrl>
                        <ToolIcon $width={24} $color="#8f8f8f"><ZoomOut size={20} strokeWidth={1.3} /></ToolIcon>
                        <ToolIcon $left={18} $color="#b4b4b4"><FavAddIcon /></ToolIcon>
                    </AddressPill>
                    <ToolIcon $left={21}><FavoritesIcon /></ToolIcon>
                    <ToolIcon $left={25}><CollectionsIcon /></ToolIcon>
                    <Avatar><ProfileIcon /></Avatar>
                    <ToolIcon $left={28}><Ellipsis size={20} /></ToolIcon>
                </Toolbar>
                <BrowserBody>
                    <PdfColumn>
                        <PdfToolbar>
                            <OutlineIcon />
                            <PageBox>1</PageBox>
                            <PageCount>of 6</PageCount>
                            <ToolIcon $left={20}><Search size={20} strokeWidth={1.3} /></ToolIcon>
                            <ToolIcon $left={278}><Minus size={22} strokeWidth={1.3} /></ToolIcon>
                            <ToolIcon $left={20}><Plus size={22} strokeWidth={1.3} /></ToolIcon>
                            <ToolIcon $left={20}><Ellipsis size={20} /></ToolIcon>
                            <PdfRule />
                            <ToolIcon $left={15}><Settings size={21} strokeWidth={1.3} /></ToolIcon>
                        </PdfToolbar>
                        <PdfCanvas>
                            <PdfPage>
                                <RedHeading>
                                    {redLines.map(line => <div key={line}>{line}</div>)}
                                </RedHeading>
                                <SectionHeading>1. Impact of climate change on surface temperature<HeadingColon>:</HeadingColon></SectionHeading>
                                <BodyCopy>
                                    {bodyLines.map(line => <CopyLine key={line}>{line}</CopyLine>)}
                                </BodyCopy>
                                <Claim>
                                    Human influence has warmed the climate at a rate that is unprecedented<br />
                                    in at least the last 2000 years
                                </Claim>
                                <ClimateChart />
                            </PdfPage>
                        </PdfCanvas>
                    </PdfColumn>
                    <Scrollbar>
                        <ArrowUp />
                        <ScrollThumb />
                        <ArrowDown />
                    </Scrollbar>
                    <Sidebar>
                        {sideApps.map((icon, i) => <SideSlot key={i}>{icon}</SideSlot>)}
                        <SideFoot>
                            <SideSlot><SideSplit /></SideSlot>
                            <SideSlot><Settings size={20} strokeWidth={1.3} /></SideSlot>
                        </SideFoot>
                    </Sidebar>
                </BrowserBody>
            </Browser>
        </Desktop>

        <Taskbar>
            <Weather>
                <CloudIcon />
                <WeatherText>
                    27°C
                    <WeatherSub>Cloudy</WeatherSub>
                </WeatherText>
            </Weather>
            <TaskCenter>
                <TaskButton><WindowsLogo /></TaskButton>
                <SearchPill><Search size={18} strokeWidth={1.8} />Search</SearchPill>
                {taskApps.map((app, i) => (
                    <TaskButton key={i}>
                        {app.icon}
                        {app.running && <RunDot />}
                    </TaskButton>
                ))}
                <TaskButton $active>
                    <NotepadIcon w={23} h={31} id="npTask" />
                    <RunDot $active />
                </TaskButton>
            </TaskCenter>
            <Tray>
                <TrayIcon><ChevronUp size={22} strokeWidth={1.3} /></TrayIcon>
                <TrayIcon><OneDriveTray /></TrayIcon>
                <Lang>ENG<br />IN</Lang>
                <TrayIcon $left={10}><Wifi size={20} strokeWidth={1.6} /></TrayIcon>
                <TrayIcon><Volume2 size={20} strokeWidth={1.5} /></TrayIcon>
                <TrayIcon><BatteryIcon /></TrayIcon>
                <Clock>13:02<br />13-12-2022</Clock>
            </Tray>
        </Taskbar>
    </Screen>
);

export default App;
